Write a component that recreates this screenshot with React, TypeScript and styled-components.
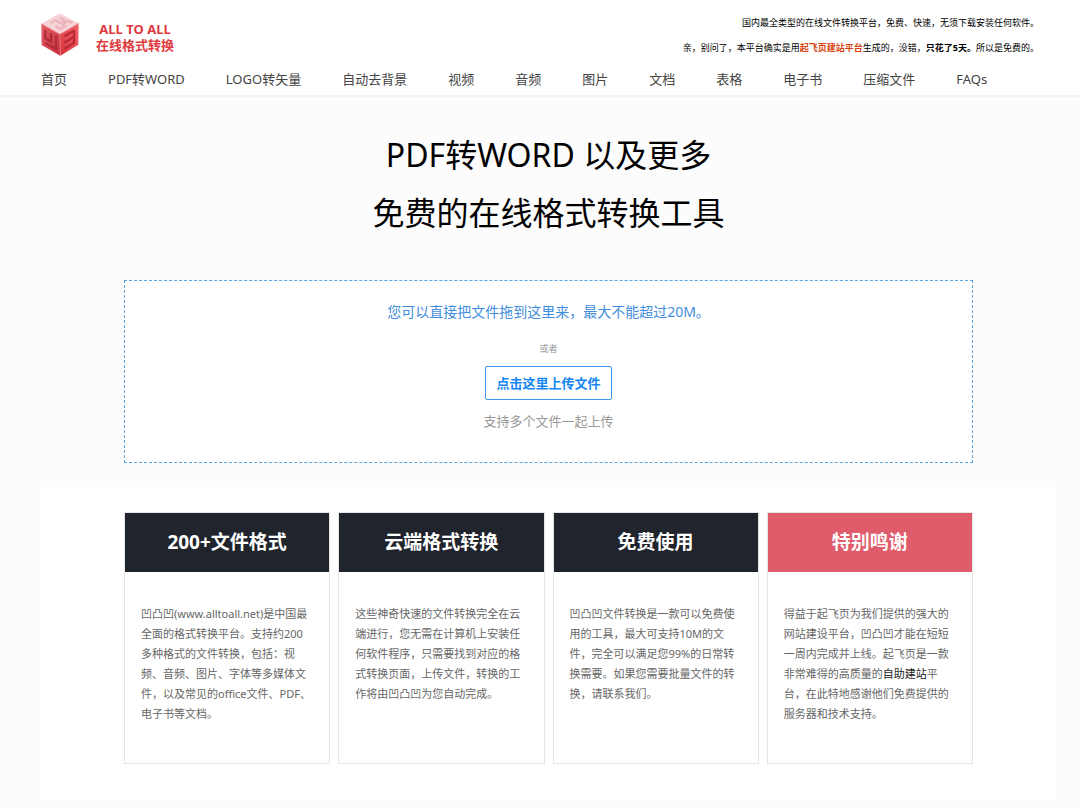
import React from 'react';
import styled, { createGlobalStyle } from 'styled-components';

const GlobalStyle = createGlobalStyle`
  *, *::before, *::after { box-sizing: border-box; }
  body {
    margin: 0;
    background: #fcfcfc;
    color: #000;
    font-family: "Noto Sans", "Noto Sans CJK SC", sans-serif;
    font-size: 13px;
    line-height: 20px;
  }
  h1, h2, p, ul { margin: 0; padding: 0; }
  a { color: inherit; text-decoration: none; }
`;

const Header = styled.header`
  background: #fff;
  border-bottom: 2px solid #f4f4f4;
  padding: 10px 41px 6px 41px;
`;

const TopBar = styled.div`
  display: flex;
  justify-content: space-between;
  align-items: flex-start;
`;

const Brand = styled.a`
  display: flex;
  align-items: center;
  gap: 17px;
  padding-top: 3px;
  color: #e03a3e;
  font-weight: 700;
  line-height: 16px;
`;

const BrandText = styled.span`
  display: flex;
  flex-direction: column;
  align-items: center;
  padding-top: 5px;
`;

const Notes = styled.div`
  font-size: 9px;
  line-height: 25px;
  text-align: right;
`;

const PlatformLink = styled.a`
  color: #d9430f;
  font-weight: 700;
`;

const Nav = styled.nav`
  padding-top: 9px;
`;

const NavList = styled.ul`
  display: flex;
  flex-wrap: wrap;
  column-gap: 41px;
  list-style: none;
  color: #444;
  line-height: 20px;
`;

const Main = styled.main`
  padding: 29px 24px 8px 41px;
`;

const Title = styled.h1`
  font-size: 32px;
  line-height: 58px;
  font-weight: 400;
  text-align: center;
`;

const DropZone = styled.section`
  display: flex;
  flex-direction: column;
  align-items: center;
  margin: 38px 83px 24px;
  padding: 20px 16px 31px;
  border: 1px dashed #5aa5e4;
  background: #fff;
`;

const DropHint = styled.p`
  color: #3f8ede;
  font-size: 14px;
  line-height: 22px;
`;

const Or = styled.p`
  margin-top: 16px;
  color: #999;
  font-size: 9px;
  line-height: 20px;
`;

const UploadButton = styled.button`
  height: 34px;
  margin: 7px 0 11px;
  padding: 0 10px;
  border: 1px solid #3c97ea;
  border-radius: 2px;
  background: #fff;
  color: #1486f5;
  font: inherit;
  font-weight: 700;
  cursor: pointer;
`;

const UploadNote = styled.p`
  color: #999;
`;

const Features = styled.section`
  display: grid;
  grid-template-columns: repeat(4, 1fr);
  gap: 8px;
  padding: 25px 83px 36px;
  background: #fff;
`;

const Card = styled.article`
  min-height: 252px;
  border: 1px solid #e5e5e5;
  background: #fff;
`;

const CardTitle = styled.h2<{ $accent?: boolean }>`
  padding: 15px 8px;
  background: ${(p) => (p.$accent ? '#e05c6b' : '#20242c')};
  color: #fff;
  font-size: 19px;
  line-height: 29px;
  font-weight: 700;
  text-align: center;
`;

const CardText = styled.p`
  padding: 32px 16px;
  color: #666;
  font-size: 11px;
  line-height: 20px;
`;

const BuilderLink = styled.a`
  color: #222;
`;

const navItems = [
  '首页', 'PDF转WORD', 'LOGO转矢量', '自动去背景', '视频', '音频',
  '图片', '文档', '表格', '电子书', '压缩文件', 'FAQs',
];

const cards: { title: string; accent?: boolean; body: React.ReactNode }[] = [
  {
    title: '200+文件格式',
    body: '凹凸凹(www.alltoall.net)是中国最全面的格式转换平台。支持约200多种格式的文件转换，包括：视频、音频、图片、字体等多媒体文件，以及常见的office文件、PDF、电子书等文档。',
  },
  {
    title: '云端格式转换',
    body: '这些神奇快速的文件转换完全在云端进行，您无需在计算机上安装任何软件程序，只需要找到对应的格式转换页面，上传文件，转换的工作将由凹凸凹为您自动完成。',
  },
  {
    title: '免费使用',
    body: '凹凸凹文件转换是一款可以免费使用的工具，最大可支持10M的文件，完全可以满足您99%的日常转换需要。如果您需要批量文件的转换，请联系我们。',
  },
  {
    title: '特别鸣谢',
    accent: true,
    body: (
      <>
        得益于起飞页为我们提供的强大的网站建设平台，凹凸凹才能在短短一周内完成并上线。起飞页是一款非常难得的高质量的
        <BuilderLink href="#builder">自助建站</BuilderLink>
        平台，在此特地感谢他们免费提供的服务器和技术支持。
      </>
    ),
  },
];

const CubeLogo = () => (
  <svg width="38" height="43" viewBox="14 12 114 129" aria-hidden="true">
    <defs>
      <linearGradient id="cubeLeft" x1="0" y1="0" x2="0.6" y2="1">
        <stop offset="0" stopColor="#e4626a" />
        <stop offset="1" stopColor="#cc3340" />
      </linearGradient>
      <linearGradient id="cubeRight" x1="1" y1="0" x2="0" y2="1">
        <stop offset="0" stopColor="#f0656a" />
        <stop offset="1" stopColor="#d8323c" />
      </linearGradient>
    </defs>
    <path d="M70 13 127 43 71 76 15 44Z" fill="#f6d3d7" />
    <path d="M15 44 71 76 72 140 16 108Z" fill="url(#cubeLeft)" />
    <path d="M127 43 71 76 72 140 126 107Z" fill="url(#cubeRight)" />
    <g fill="none" strokeWidth="7" strokeLinejoin="round">
      <path d="M42 42 57 34 73 43 87 35 70 26M57 51 72 60 88 51 78 45 96 36 108 43" stroke="#ecb4bb" />
      <path d="M27 62V88L44 98V72M59 80V120L27 102" stroke="#b02c38" />
      <path d="M84 82 113 65V102L84 119M84 101 112 84" stroke="#b92a35" />
    </g>
    <path d="M15 44 71 76 127 43M71 76 72 140" fill="none" stroke="#f08a91" strokeWidth="2" />
  </svg>
);

export default function App() {
  return (
    <>
      <GlobalStyle />
      <Header>
        <TopBar>
          <Brand href="#home">
            <CubeLogo />
            <BrandText>
              <span>ALL TO ALL</span>
              <span>在线格式转换</span>
            </BrandText>
          </Brand>
          <Notes>
            <p>国内最全类型的在线文件转换平台，免费、快速，无须下载安装任何软件。</p>
            <p>
              亲，别问了，本平台确实是用
              <PlatformLink href="#platform">起飞页建站平台</PlatformLink>
              生成的，没错，<strong>只花了5天。</strong>所以是免费的。
            </p>
          </Notes>
        </TopBar>
        <Nav>
          <NavList>
            {navItems.map((item) => (
              <li key={item}><a href={`#${item}`}>{item}</a></li>
            ))}
          </NavList>
        </Nav>
      </Header>
      <Main>
        <Title>PDF转WORD 以及更多<br />免费的在线格式转换工具</Title>
        <DropZone>
          <DropHint>您可以直接把文件拖到这里来，最大不能超过20M。</DropHint>
          <Or>或者</Or>
          <UploadButton type="button">点击这里上传文件</UploadButton>
          <UploadNote>支持多个文件一起上传</UploadNote>
        </DropZone>
        <Features>
          {cards.map((card) => (
            <Card key={card.title}>
              <CardTitle $accent={card.accent}>{card.title}</CardTitle>
              <CardText>{card.body}</CardText>
            </Card>
          ))}
        </Features>
      </Main>
    </>
  );
}
